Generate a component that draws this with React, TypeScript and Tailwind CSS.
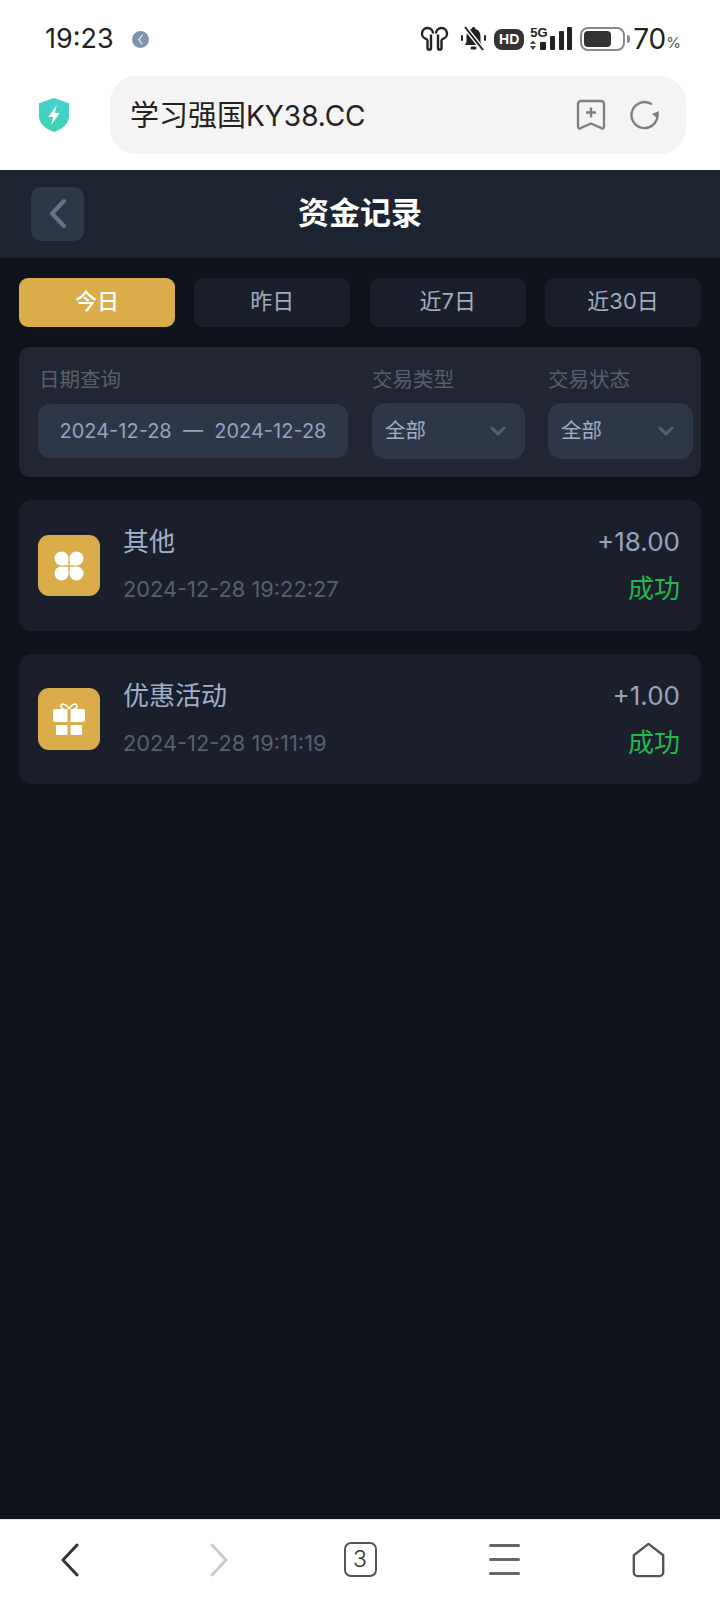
const sans = "font-['Inter','Noto_Sans_CJK_SC',sans-serif]";

const tabs = ["今日", "昨日", "近7日", "近30日"];

const StatusIcons = () => (
  <div className="flex items-center">
    {/* earbuds */}
    <svg width="29" height="26" viewBox="0 0 29 26" fill="none" stroke="#222" strokeWidth="2.400" strokeLinejoin="round">
      <path d="M13 7.500a5.500 5.500 0 1 0-7 5.300c1 .3 1.500 1 1.500 2v7.500c0 1.800 3.500 1.800 3.500 0V8.500" />
      <path d="M16 7.500a5.500 5.500 0 1 1 7 5.300c-1 .3-1.500 1-1.500 2v7.500c0 1.800-3.500 1.800-3.500 0V8.500" />
    </svg>
    {/* muted bell */}
    <svg width="25" height="26" viewBox="0 0 25 26" className="ml-[12px]">
      <path d="M12.500 1a2 2 0 0 1 2 2c3.500 1 5 3.500 5 7.500v5.500l1.500 3H4l1.500-3v-5.500c0-4 1.500-6.500 5-7.500a2 2 0 0 1 2-2Z" fill="#222" />
      <rect x="9.500" y="20.500" width="6" height="3" rx="1.500" fill="#222" />
      <rect x="0" y="9" width="2" height="6" rx="1" fill="#222" />
      <rect x="23" y="9" width="2" height="6" rx="1" fill="#222" />
      <path d="M4 1l18 23" stroke="#fff" strokeWidth="4.500" />
      <path d="M4 1l18 23" stroke="#222" strokeWidth="2" />
    </svg>
    <div className="ml-2 w-[30px] h-[21px] rounded-[8px] bg-[#333] flex items-center justify-center text-white text-[14px] font-bold leading-none font-['Liberation_Sans',sans-serif]">
      HD
    </div>
    {/* 5G signal */}
    <div className="ml-[6px] relative w-[43px] h-[24px]">
      <span className="absolute left-0 -top-[1px] text-[13px] font-bold leading-[13px] text-[#222] font-['Liberation_Sans',sans-serif]">5G</span>
      <svg width="43" height="24" viewBox="0 0 43 24" className="absolute inset-0">
        <path d="M0 17l3-3.500 3 3.500ZM0 19l3 4 3-4Z" fill="#444" />
        <rect x="10" y="15" width="6" height="8" rx="1" fill="#222" />
        <rect x="20" y="9" width="5" height="14" rx="1" fill="#222" />
        <rect x="29" y="4" width="5" height="19" rx="1" fill="#222" />
        <rect x="37" y="0" width="5" height="23" rx="1" fill="#222" />
      </svg>
    </div>
    {/* battery */}
    <div className="ml-[7px] flex items-center">
      <div className="w-[45px] h-[24px] rounded-[8px] border-[2.500px] border-[#888] p-[2px]">
        <div className="w-[27px] h-full rounded-[4px] bg-[#333]" />
      </div>
      <div className="ml-[2px] w-[3px] h-[8px] rounded-r-[3px] bg-[#888]" />
    </div>
    <span className="ml-[3px] text-[28px] leading-none text-[#222]">70</span>
    <span className="text-[15px] leading-none text-[#555] mt-[7px]">%</span>
  </div>
);

const Chevron = () => (
  <svg width="16" height="10" viewBox="0 0 16 10" fill="none" stroke="#566070" strokeWidth="3" strokeLinecap="round" strokeLinejoin="round">
    <path d="M2 2l6 6 6-6" />
  </svg>
);

const App = () => {
  return (
    <div className={`${sans} w-[720px] h-[1600px] flex flex-col bg-[#0f131c] overflow-hidden`}>
      <div className="bg-white h-[170px] shrink-0">
        <div className="h-[76px] pl-[45px] pr-[39px] flex items-start justify-between pt-[25px]">
          <div className="flex items-center">
            <span className="text-[27px] leading-[28px] text-[#222]">19:23</span>
            <svg width="17" height="17" viewBox="0 0 16 16" className="ml-[18px]">
              <circle cx="8" cy="8" r="8" fill="#7f93ad" />
              <path d="M10 3.500L6.500 8l3 4.500" fill="none" stroke="#fff" strokeWidth="1" />
            </svg>
          </div>
          <StatusIcons />
        </div>
        <div className="flex items-center">
          <div className="w-[110px] shrink-0 flex justify-center">
            <svg width="32" height="36" viewBox="0 0 34 38" className="-ml-[2px]">
              <defs>
                <linearGradient id="shield" x1="0" y1="0" x2="0" y2="1">
                  <stop offset="0" stopColor="#45d2d0" />
                  <stop offset="1" stopColor="#3ed3ae" />
                </linearGradient>
              </defs>
              <path d="M17 1l16 5.500V20c0 8-7 14-16 17C8 34 1 28 1 20V6.500Z" fill="url(#shield)" />
              <path d="M20 8l-9 13h5l-2 9 9-13h-5Z" fill="#fff" />
            </svg>
          </div>
          <div className="w-[576px] h-[78px] rounded-[26px] bg-[#f4f4f4] flex items-center pl-5 pr-[26px]">
            <span className="flex-1 text-[29px] leading-none text-[#222]">
              学习强国<span className="text-[28px]">KY38.CC</span>
            </span>
            <svg width="30" height="32" viewBox="0 0 30 32" fill="none" stroke="#808080" strokeWidth="2.400" className="mr-[24px] mb-[1px]">
              <path d="M5 2h20a3 3 0 0 1 3 3v23c0 1.500-1.500 2-2.500 1.200L15 24.500 4.500 29.200C3.500 30 2 29.500 2 28V5a3 3 0 0 1 3-3Z" strokeLinejoin="round" />
              <path d="M15 8.500v10M10 13.500h10" />
            </svg>
            <svg width="30" height="30" viewBox="0 0 30 30" fill="none" className="mb-[1px]">
              <path d="M27.500 15A13 13 0 1 1 21 3.800" stroke="#808080" strokeWidth="2.400" strokeLinecap="round" />
              <path d="M29 11l-1 8-6-5Z" fill="#808080" />
            </svg>
          </div>
        </div>
      </div>

      <div className="h-[88px] shrink-0 bg-[#1c2331] relative flex items-center justify-center">
        <div className="absolute left-[31px] top-[17px] w-[53px] h-[54px] rounded-[10px] bg-[#2d3748] flex items-center justify-center">
          <svg width="20" height="32" viewBox="0 0 20 32" fill="none" stroke="#64748b" strokeWidth="4" strokeLinecap="round" strokeLinejoin="round" className="ml-[1px]">
            <path d="M16 3L4 15.500 16 28" />
          </svg>
        </div>
        <span className="text-[31px] font-bold text-white leading-none -mt-[4px]">资金记录</span>
      </div>

      <div className="flex-1 px-[19px] pt-[20px] bg-[#0f131c]">
        <div className="grid grid-cols-4 gap-[19.500px]">
          {tabs.map((t, i) => (
            <div
              key={t}
              className={
                i === 0
                  ? "h-[49px] rounded-[9px] bg-[#dbac4a] flex items-center justify-center text-[22px] font-medium text-white pb-[2px]"
                  : "h-[49px] rounded-[9px] bg-[#1a1f2b] flex items-center justify-center text-[22px] text-[#a0aec0] pb-[2px]"
              }
            >
              {t}
            </div>
          ))}
        </div>

        <div className="mt-[20px] h-[130px] rounded-[10px] bg-[#212632] flex pl-[19px] pr-2 pt-[21px]">
          <div className="w-[310px]">
            <div className="text-[20.500px] leading-[24px] text-[#566070] pl-[1px]">日期查询</div>
            <div className="mt-[12px] h-[54px] rounded-[12px] bg-[#2d3748] flex items-center justify-center text-[20px] text-[#94a3c0] whitespace-pre">
              2024-12-28{"  "}—{"  "}2024-12-28
            </div>
          </div>
          <div className="w-[153px] ml-[24px]">
            <div className="text-[20.500px] leading-[24px] text-[#566070]">交易类型</div>
            <div className="mt-[11px] h-[56px] rounded-[14px] bg-[#2d3748] flex items-center justify-between pl-[13px] pr-[19px] text-[20.500px] text-[#a0aec0]">
              全部
              <Chevron />
            </div>
          </div>
          <div className="w-[145px] ml-[23px]">
            <div className="text-[20.500px] leading-[24px] text-[#566070]">交易状态</div>
            <div className="mt-[11px] h-[56px] rounded-[14px] bg-[#2d3748] flex items-center justify-between pl-[13px] pr-[19px] text-[20.500px] text-[#a0aec0]">
              全部
              <Chevron />
            </div>
          </div>
        </div>

        <div className="mt-[23px] h-[131px] rounded-[12px] bg-[#1a1f2b] flex pl-[19px] pr-[21px]">
          <div className="mt-[35px] w-[62px] h-[61px] rounded-[11px] bg-[#dbac4a] flex items-center justify-center">
            <svg width="30" height="30" viewBox="0 0 30 30" fill="#fff">
              <circle cx="7.500" cy="7.500" r="7" />
              <circle cx="22.500" cy="7.500" r="7" />
              <circle cx="7.500" cy="22.500" r="7" />
              <circle cx="22.500" cy="22.500" r="7" />
              <rect x="8" y="8" width="6.300" height="6.300" />
              <rect x="15.700" y="8" width="6.300" height="6.300" />
              <rect x="8" y="15.700" width="6.300" height="6.300" />
              <rect x="15.700" y="15.700" width="6.300" height="6.300" />
            </svg>
          </div>
          <div className="ml-[23px] flex-1 pt-[27px]">
            <div className="text-[26px] leading-[30px] text-[#a0b0cc]">其他</div>
            <div className="mt-[17px] text-[21.800px] leading-[30px] text-[#566070]">2024-12-28 19:22:27</div>
          </div>
          <div className="pt-[27px] text-right">
            <div className="text-[26px] leading-[30px] text-[#94a3c0]">+18.00</div>
            <div className="mt-[17px] text-[26px] leading-[30px] text-[#22b84f]">成功</div>
          </div>
        </div>

        <div className="mt-[23px] h-[130px] rounded-[12px] bg-[#1a1f2b] flex pl-[19px] pr-[21px]">
          <div className="mt-[34px] w-[62px] h-[62px] rounded-[11px] bg-[#dbac4a] flex items-center justify-center">
            <svg width="32" height="32" viewBox="0 0 32 32" fill="#fff">
              <path d="M2 6h12.500v13H2a2 2 0 0 1-2-2V8a2 2 0 0 1 2-2ZM17.500 6H30a2 2 0 0 1 2 2v9a2 2 0 0 1-2 2H17.500ZM3 22h11.500v10H4a1 1 0 0 1-1-1ZM17.500 22H29v9a1 1 0 0 1-1 1H17.500Z" />
              <path d="M16 6C13 0 7 0 8 3.500c.4 1.500 2 2.500 3 2.500M16 6c3-6 9-6 8-2.500-.4 1.500-2 2.500-3 2.500" fill="none" stroke="#fff" strokeWidth="1.600" />
            </svg>
          </div>
          <div className="ml-[23px] flex-1 pt-[27px]">
            <div className="text-[26px] leading-[30px] text-[#a0b0cc]">优惠活动</div>
            <div className="mt-[17px] text-[21.800px] leading-[30px] text-[#566070]">2024-12-28 19:11:19</div>
          </div>
          <div className="pt-[27px] text-right">
            <div className="text-[26px] leading-[30px] text-[#94a3c0]">+1.00</div>
            <div className="mt-[17px] text-[26px] leading-[30px] text-[#22b84f]">成功</div>
          </div>
        </div>
      </div>

      <div className="h-[81px] shrink-0 bg-white border-t border-[#e5e5e5] grid grid-cols-5 items-center pb-[1px]">
        <div className="flex justify-center">
          <svg width="20" height="34" viewBox="0 0 20 34" fill="none" stroke="#333" strokeWidth="3" strokeLinecap="round" strokeLinejoin="round" className="-ml-[4px]">
            <path d="M17 2L3 17l14 15" />
          </svg>
        </div>
        <div className="flex justify-center">
          <svg width="20" height="34" viewBox="0 0 20 34" fill="none" stroke="#ccc" strokeWidth="3" strokeLinecap="round" strokeLinejoin="round" className="ml-[5px]">
            <path d="M3 2l14 15L3 32" />
          </svg>
        </div>
        <div className="flex justify-center">
          <div className="w-[33px] h-[35px] rounded-[7px] border-2 border-[#555] flex items-center justify-center text-[23px] leading-none text-[#333] font-light">
            3
          </div>
        </div>
        <div className="flex justify-center">
          <div className="w-[31px] flex flex-col gap-[11px]">
            <div className="h-[3px] rounded-full bg-[#666]" />
            <div className="h-[3px] rounded-full bg-[#666]" />
            <div className="h-[3px] rounded-full bg-[#666]" />
          </div>
        </div>
        <div className="flex justify-center">
          <svg width="35" height="36" viewBox="0 0 35 38" fill="none" stroke="#555" strokeWidth="2.500" strokeLinejoin="round">
            <path d="M17.500 2L33 14v18a4 4 0 0 1-4 4H6a4 4 0 0 1-4-4V14Z" />
          </svg>
        </div>
      </div>
    </div>
  );
};

export default App;
